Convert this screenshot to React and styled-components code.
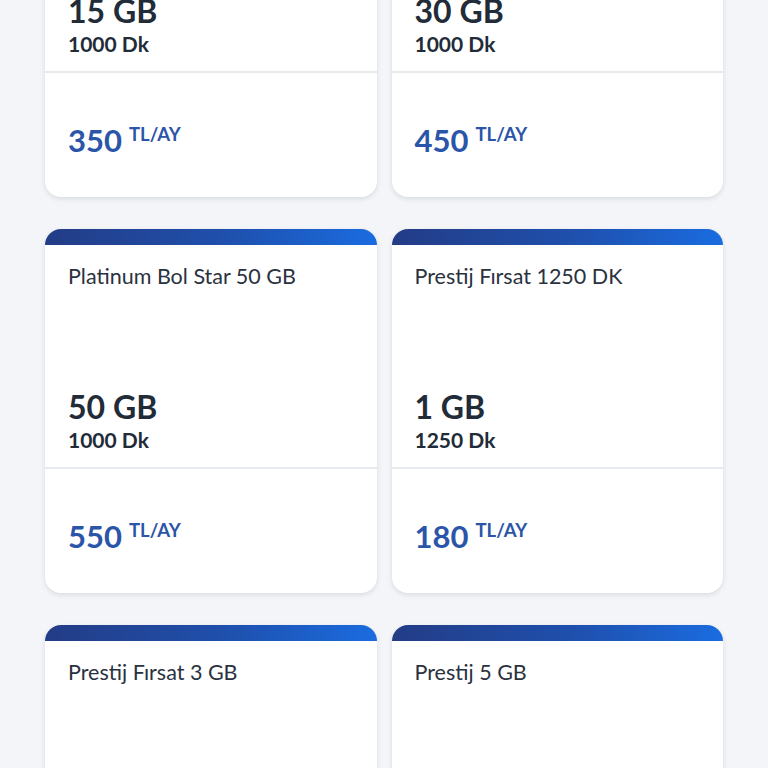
import React from "react";
import styled, { createGlobalStyle } from "styled-components";

const Global = createGlobalStyle`
  html, body { margin: 0; padding: 0; background: #f3f5f8; }
  body { font-family: Lato, "Noto Sans", sans-serif; color: #232d3b; overflow: hidden; }
`;

const Grid = styled.div`
  display: grid;
  grid-template-columns: 1fr 1fr;
  column-gap: 15px;
  row-gap: 32px;
  padding: 0 45px;
  margin-top: -167px;
`;

const Card = styled.div`
  background: #fff;
  border-radius: 16px;
  box-shadow: 0 2px 5px rgba(30, 40, 60, 0.12);
  overflow: hidden;
  display: flex;
  flex-direction: column;
`;

const Stripe = styled.div`
  height: 16px;
  background: linear-gradient(90deg, #233c86 0%, #1f50ad 55%, #1a6ce0 100%);
`;

const Top = styled.div`
  height: 224px;
  box-sizing: border-box;
  padding: 16px 23px 14px;
  display: flex;
  flex-direction: column;
  justify-content: space-between;
  border-bottom: 2px solid #e6e9ee;
`;

const Title = styled.div`
  font-size: 21.5px;
  line-height: 30px;
  font-weight: 400;
  color: #2a3240;
`;

const Data = styled.div`
  font-size: 32px;
  line-height: 36px;
  font-weight: 700;
  color: #222b38;
  margin-bottom: -1px;
`;

const Minutes = styled.div`
  font-size: 21px;
  line-height: 26px;
  font-weight: 700;
  color: #222b38;
  margin-top: 3px;
`;

const Bottom = styled.div`
  height: 124px;
  box-sizing: border-box;
  padding: 0 23px;
  display: flex;
  align-items: center;
`;

const Price = styled.div`
  display: flex;
  align-items: flex-start;
  color: #2b55a8;
  font-weight: 700;
  margin-top: 10px;
`;

const Amount = styled.span`
  font-size: 31px;
  line-height: 34px;
`;

const Unit = styled.span`
  font-size: 18.5px;
  line-height: 18px;
  margin-left: 7px;
  margin-top: 2px;
`;

const plans = [
  { title: "Platinum Bol Star 15 GB", data: "15 GB", min: "1000 Dk", price: "350" },
  { title: "Platinum Bol Star 30 GB", data: "30 GB", min: "1000 Dk", price: "450" },
  { title: "Platinum Bol Star 50 GB", data: "50 GB", min: "1000 Dk", price: "550" },
  { title: "Prestij Fırsat 1250 DK", data: "1 GB", min: "1250 Dk", price: "180" },
  { title: "Prestij Fırsat 3 GB", data: "3 GB", min: "1000 Dk", price: "200" },
  { title: "Prestij 5 GB", data: "5 GB", min: "1000 Dk", price: "250" },
];

export default function App() {
  return (
    <>
      <Global />
      <Grid>
        {plans.map((p) => (
          <Card key={p.title}>
            <Stripe />
            <Top>
              <Title>{p.title}</Title>
              <div>
                <Data>{p.data}</Data>
                <Minutes>{p.min}</Minutes>
              </div>
            </Top>
            <Bottom>
              <Price>
                <Amount>{p.price}</Amount>
                <Unit>TL/AY</Unit>
              </Price>
            </Bottom>
          </Card>
        ))}
      </Grid>
    </>
  );
}
